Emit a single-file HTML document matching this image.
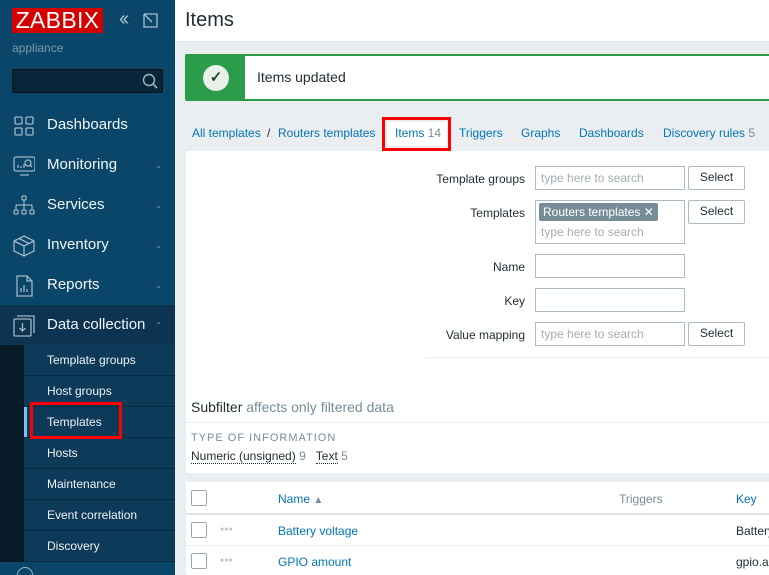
<!DOCTYPE html>
<html style="overflow:hidden;width:769px;height:575px"><head><meta charset="utf-8"><style>
*{box-sizing:border-box;margin:0;padding:0}
body{width:769px;height:575px;overflow:hidden;background:#ebeef0;font-family:"Liberation Sans",Arial,sans-serif;font-size:12px;color:#1f2c33;position:relative}
.sb{position:absolute;left:0;top:0;width:175px;height:575px;background:#0a466a;overflow:hidden}
.logo{position:absolute;left:12px;top:8px;width:91px;height:25px;background:#d40000;color:#fff;font-size:23px;line-height:25px;text-align:center;letter-spacing:0.3px}
.app{position:absolute;left:12px;top:41px;color:#7a99ad;font-size:12px}
.srch{position:absolute;left:12px;top:69px;width:151px;height:24px;background:#08263a;border:1px solid #111;border-radius:2px}
.mi{position:absolute;left:0;width:175px;height:40px;color:#f2f5f7;font-size:15px;line-height:40px;padding-left:47px}
.mi .ch{position:absolute;right:13px;top:1px;font-size:8px;color:#7f9db0}
.mi svg{position:absolute;left:13px;top:10px}
.sub{position:absolute;left:24px;width:151px;height:31px;background:#0d3a58;border-bottom:1px solid #082a40;color:#eef2f5;font-size:12px;line-height:30px;padding-left:23px}
.main{position:absolute;left:175px;top:0;width:594px;height:575px;overflow:hidden}
.hdr{position:absolute;left:0;top:0;width:594px;height:42px;background:#fff;border-bottom:1px solid #dfe4e7}
.hdr h1{font-weight:normal;font-size:20px;position:absolute;left:10px;top:9px;color:#1f2c33}
.msg{position:absolute;left:10px;top:54px;width:600px;height:47px;border:2px solid #2b9c49;border-radius:2px;background:#fff}
.msg .g{position:absolute;left:0;top:0;width:58px;height:43px;background:#2b9c49}
.msg .g div{position:absolute;left:16px;top:9px;width:26px;height:26px;border-radius:50%;background:#e9f0ea;color:#1f4a2a;text-align:center;line-height:26px;font-size:15px;font-weight:bold}
.msg span{position:absolute;left:70px;top:13px;font-size:14px}
.tabs{position:absolute;top:126px;left:17px;font-size:12px;color:#0275b8;white-space:nowrap}
.tabs span{position:absolute}
.itab{position:absolute;left:212px;top:122px;width:60px;height:24px;background:#fff}
.red{position:absolute;border:3px solid #f00}
.panel{position:absolute;left:11px;top:151px;width:600px;height:322px;background:#fff}
.lbl{position:absolute;right:0;font-size:12px;text-align:right}
.inp{position:absolute;border:1px solid #acbbc4;background:#fff;color:#a3adb4;font-size:12px;padding:5px 5px}
.btn{position:absolute;border:1px solid #acbbc4;background:#fff;font-size:12px;text-align:center;line-height:20px;border-radius:2px}
.tbl{position:absolute;left:11px;top:482px;width:600px;height:93px;background:#fff}
.cb{position:absolute;width:16px;height:16px;border:1px solid #9aa8b1;border-radius:2px;background:#fff}
.a{color:#0275b8}
.dots{position:absolute;left:34px;color:#b9c3c9;font-size:7px;letter-spacing:0px}
</style></head><body>
<div class="sb">
<div class="logo">ZABBIX</div>
<div style="position:absolute;left:119px;top:8px;color:#a8c0cf;font-size:20px;letter-spacing:-3px">&lsaquo;&lsaquo;</div>
<svg style="position:absolute;left:143px;top:13px" width="15" height="15"><path d="M5 1H14V14H1V5M1 1L9 9M1 1V6M1 1H6" stroke="#a8c0cf" fill="none" stroke-width="1.3"/></svg>
<div class="app">appliance</div>
<div class="srch"><svg style="position:absolute;right:4px;top:3px" width="16" height="16"><circle cx="7" cy="7" r="5.5" stroke="#9fb6c4" fill="none" stroke-width="1.4"/><path d="M11 11L15 15" stroke="#9fb6c4" stroke-width="1.6"/></svg></div>
<div class="mi" style="top:105px"><svg width="22" height="22"><g stroke="#9fb6c4" fill="none" stroke-width="1.3"><rect x="2" y="2" width="7" height="7" rx="1"/><rect x="13" y="2" width="7" height="7" rx="1"/><rect x="2" y="13" width="7" height="7" rx="1"/><rect x="13" y="13" width="7" height="7" rx="1"/></g></svg>Dashboards</div>
<div class="mi" style="top:145px"><svg width="22" height="22"><g stroke="#9fb6c4" fill="none" stroke-width="1.3"><rect x="1" y="2" width="21" height="14" rx="2"/><path d="M7 20H16M5 13V10M8 13V11M11 13V9"/><circle cx="15" cy="8" r="3"/><path d="M17 10L19 12"/></g></svg>Monitoring<span class="ch">&#8964;</span></div>
<div class="mi" style="top:185px"><svg width="22" height="22"><g stroke="#9fb6c4" fill="none" stroke-width="1.2"><rect x="9" y="1" width="4" height="4" rx="1"/><path d="M11 5V10M3 10H19M3 10V14M11 10V14M19 10V14"/><rect x="1" y="15" width="4" height="4" rx="1"/><rect x="9" y="15" width="4" height="4" rx="1"/><rect x="17" y="15" width="4" height="4" rx="1"/></g></svg>Services<span class="ch">&#8964;</span></div>
<div class="mi" style="top:225px"><svg width="22" height="22"><g stroke="#9fb6c4" fill="none" stroke-width="1.3"><path d="M11 1L21 6V16L11 21L1 16V6ZM1 6L11 11L21 6M11 11V21M6 3.5L16 8.5"/></g></svg>Inventory<span class="ch">&#8964;</span></div>
<div class="mi" style="top:265px"><svg width="22" height="22"><g stroke="#9fb6c4" fill="none" stroke-width="1.3"><path d="M4 1H14L19 6V21H4ZM14 1V6H19M8 17V13M11 17V10M14 17V14"/></g></svg>Reports<span class="ch">&#8964;</span></div>
<div class="mi" style="top:305px;background:#0c3450"><svg width="22" height="22"><g stroke="#9fb6c4" fill="none" stroke-width="1.3"><rect x="1" y="4" width="17" height="17" rx="1"/><path d="M4 1H21V18M9.5 8V16M6.5 13L9.5 16L12.5 13"/></g></svg>Data collection<span class="ch">&#8963;</span></div>
<div style="position:absolute;left:0;top:345px;width:24px;height:217px;background:#061b27"></div>
<div class="sub" style="top:345px">Template groups</div>
<div class="sub" style="top:376px">Host groups</div>
<div class="sub" style="top:407px">Templates</div>
<div style="position:absolute;left:24px;top:407px;width:3px;height:30px;background:#7ec3ee"></div>
<div class="sub" style="top:438px">Hosts</div>
<div class="sub" style="top:469px">Maintenance</div>
<div class="sub" style="top:500px">Event correlation</div>
<div class="sub" style="top:531px">Discovery</div>
<div class="red" style="left:30px;top:402px;width:92px;height:37px"></div>
<div style="position:absolute;left:17px;top:567px;width:16px;height:16px;border:1.5px solid #9fb6c4;border-radius:50%"></div>
</div>
<div class="main">
<div class="hdr"><h1>Items</h1></div>
<div class="msg"><div class="g"><div>&#10003;</div></div><span>Items updated</span></div>
<div class="itab"></div>
<div class="red" style="left:207px;top:117px;width:69px;height:34px"></div>
<div class="tabs">
<span style="left:0">All templates</span><span style="left:75px;color:#1f2c33">/</span><span style="left:86px">Routers templates</span>
<span style="left:203px">Items <span style="position:static;color:#768d99">14</span></span>
<span style="left:267px">Triggers</span><span style="left:329px">Graphs</span><span style="left:387px">Dashboards</span><span style="left:471px">Discovery rules <span style="position:static;color:#768d99">5</span></span>
</div>
<div class="panel">
<div class="lbl" style="left:0;width:339px;top:21px">Template groups</div>
<div class="inp" style="left:349px;top:15px;width:150px;height:24px;padding-top:4px">type here to search</div>
<div class="btn" style="left:502px;top:15px;width:57px;height:24px">Select</div>
<div class="lbl" style="left:0;width:339px;top:55px">Templates</div>
<div class="inp" style="left:349px;top:49px;width:150px;height:44px"></div>
<div style="position:absolute;left:353px;top:52px;width:119px;height:18px;background:#768d99;color:#fff;border-radius:2px;padding:2px 4px;font-size:12px">Routers templates &#10005;</div>
<div style="position:absolute;left:355px;top:74px;color:#a3adb4">type here to search</div>
<div class="btn" style="left:502px;top:49px;width:57px;height:24px">Select</div>
<div class="lbl" style="left:0;width:339px;top:109px">Name</div>
<div class="inp" style="left:349px;top:103px;width:150px;height:24px"></div>
<div class="lbl" style="left:0;width:339px;top:143px">Key</div>
<div class="inp" style="left:349px;top:137px;width:150px;height:24px"></div>
<div class="lbl" style="left:0;width:339px;top:177px">Value mapping</div>
<div class="inp" style="left:349px;top:171px;width:150px;height:24px;padding-top:4px">type here to search</div>
<div class="btn" style="left:502px;top:171px;width:57px;height:24px">Select</div>
<div style="position:absolute;left:240px;top:206px;width:360px;height:1px;background:#ebeef0"></div>
<div style="position:absolute;left:5px;top:248px;font-size:14px">Subfilter <span style="color:#768d99">affects only filtered data</span></div>
<div style="position:absolute;left:0;top:271px;width:600px;height:1px;background:#ebeef0"></div>
<div style="position:absolute;left:5px;top:281px;font-size:11px;color:#768d99;letter-spacing:1px">TYPE OF INFORMATION</div>
<div style="position:absolute;left:5px;top:298px;font-size:12px"><span style="border-bottom:1px dotted #1f2c33">Numeric (unsigned)</span> <span style="color:#768d99">9</span> &nbsp;&nbsp;<span style="border-bottom:1px dotted #1f2c33">Text</span> <span style="color:#768d99">5</span></div>
</div>
<div class="tbl">
<div style="position:absolute;left:0;top:31px;width:600px;height:2px;background:#dfe4e7"></div>
<div style="position:absolute;left:0;top:63px;width:600px;height:1px;background:#ebeef0"></div>
<div class="cb" style="left:5px;top:8px"></div>
<div class="a" style="position:absolute;left:92px;top:10px">Name <span style="color:#768d99;font-size:10px">&#9650;</span></div>
<div style="position:absolute;left:433px;top:10px;color:#768d99">Triggers</div>
<div class="a" style="position:absolute;left:550px;top:10px">Key</div>
<div class="cb" style="left:5px;top:40px"></div>
<div class="dots" style="top:44px">&#9679;&#9679;&#9679;</div>
<div class="a" style="position:absolute;left:92px;top:42px">Battery voltage</div>
<div style="position:absolute;left:550px;top:42px">Battery</div>
<div class="cb" style="left:5px;top:71px"></div>
<div class="dots" style="top:75px">&#9679;&#9679;&#9679;</div>
<div class="a" style="position:absolute;left:92px;top:73px">GPIO amount</div>
<div style="position:absolute;left:550px;top:73px">gpio.a</div>
</div>
</div>
</body></html>
